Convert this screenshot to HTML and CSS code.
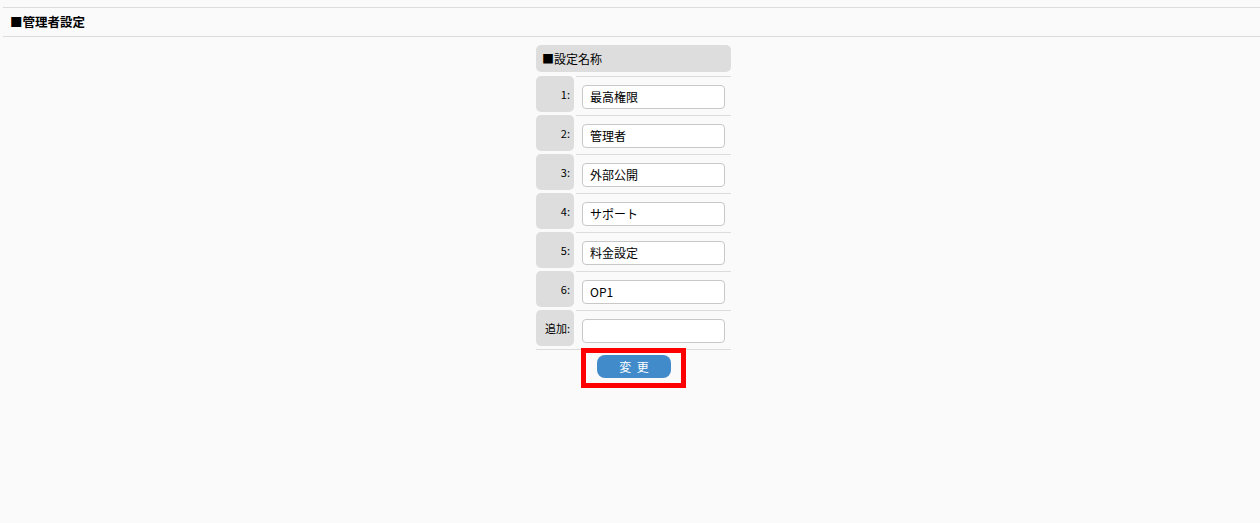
FILE: index.html
```html
<!DOCTYPE html>
<html lang="ja">
<head>
<meta charset="utf-8">
<title>管理者設定</title>
<link rel="stylesheet" href="styles.css">
</head>
<body>
<div class="page-title">■管理者設定</div>
<div class="content">
  <div class="form">
    <div class="form-head">■設定名称</div>
    <div class="rows">
      <div class="row"><div class="label">1:</div><div class="field"><input class="text" type="text" value="最高権限"></div></div>
      <div class="row"><div class="label">2:</div><div class="field"><input class="text" type="text" value="管理者"></div></div>
      <div class="row"><div class="label">3:</div><div class="field"><input class="text" type="text" value="外部公開"></div></div>
      <div class="row"><div class="label">4:</div><div class="field"><input class="text" type="text" value="サポート"></div></div>
      <div class="row"><div class="label">5:</div><div class="field"><input class="text" type="text" value="料金設定"></div></div>
      <div class="row"><div class="label">6:</div><div class="field"><input class="text" type="text" value="OP1"></div></div>
      <div class="row"><div class="label">追加:</div><div class="field"><input class="text" type="text" value=""></div></div>
    </div>
    <div class="actions">
      <div class="highlight"><button class="btn" type="button">変&nbsp;&nbsp;更</button></div>
    </div>
  </div>
</div>
</body>
</html>
```
FILE: styles.css
```css
html, body {
  margin: 0;
  padding: 0;
}
body {
  background: #fafafa;
  font-family: "Noto Sans CJK JP", "Liberation Sans", sans-serif;
  color: #000;
  width: 1260px;
  height: 523px;
  overflow: hidden;
}
.page-title {
  margin: 7px 0 0 3px;
  border-top: 1px solid #dcdcdc;
  border-bottom: 1px solid #dcdcdc;
  height: 28px;
  line-height: 27px;
  padding-left: 7px;
  font-size: 12.5px;
  font-weight: bold;
}
.content {
  display: flex;
  justify-content: center;
  padding-left: 7px;
  padding-top: 8px;
}
.form {
  width: 195px;
  display: flex;
  flex-direction: column;
}
.form-head {
  height: 27px;
  line-height: 27px;
  background: #dddddd;
  border-radius: 5px;
  padding-left: 6px;
  font-size: 12px;
  margin-bottom: 4px;
}
.rows {
  display: flex;
  flex-direction: column;
  border-bottom: 1px solid #dcdcdc;
}
.row {
  display: flex;
  gap: 2px;
  height: 39px;
}
.label {
  width: 34px;
  height: 36px;
  padding-right: 4px;
  background: #dddddd;
  border-radius: 5px;
  font-size: 11px;
  color: #000;
  display: flex;
  align-items: center;
  justify-content: flex-end;
}
.field {
  flex: 1;
  border-top: 1px solid #dcdcdc;
  padding: 6px 6px 0 6px;
}
.text {
  box-sizing: border-box;
  width: 143px;
  height: 24px;
  border: 1px solid #c8c8c8;
  border-radius: 4px;
  background: #fff;
  padding: 0 7px;
  font-family: "Noto Sans CJK JP", "Liberation Sans", sans-serif;
  font-size: 12px;
  color: #000;
  outline: none;
}
.actions {
  display: flex;
  justify-content: center;
  margin-top: -2px;
}
.highlight {
  border: 5px solid #ff0000;
  padding: 2px 10px 5px 11px;
}
.btn {
  width: 74px;
  height: 23px;
  background: #428bca;
  border: none;
  border-radius: 8px;
  color: #fff;
  font-family: "Noto Sans CJK JP", "Liberation Sans", sans-serif;
  font-size: 12px;
  padding: 0;
  display: block;
}
```
